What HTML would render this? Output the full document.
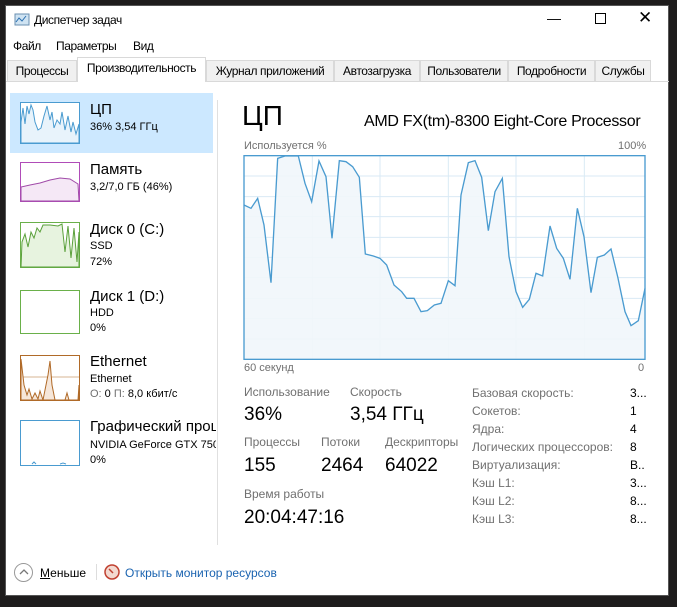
<!DOCTYPE html>
<html><head><meta charset="utf-8"><style>
*{margin:0;padding:0;box-sizing:border-box}
body{width:677px;height:607px;background:#1e1c1c;position:relative;overflow:hidden;font-family:"Liberation Sans",sans-serif;color:#000}
#win{position:absolute;left:5px;top:5px;width:664px;height:591px;background:#fff;border:1px solid #555}
.a{position:absolute;white-space:nowrap}
.n{font-size:12px;letter-spacing:-0.4px}
.tab{position:absolute;top:60px;height:21px;background:#f0f0f0;border:1px solid #d9d9d9;border-bottom:none;font-size:12px;letter-spacing:-0.4px;text-align:center;line-height:20px;color:#000}
.box{position:absolute;left:20px;width:60px;border:1px solid}
.t1{font-size:15px;color:#000}
.t2{font-size:11px;color:#000}
.lab{font-size:12px;color:#707070}
.val{font-size:19px;color:#000}
.r{font-size:12px;color:#707070}
.rv{font-size:12px;color:#000}
</style></head><body>
<div id="win"></div>
<svg class="a" style="left:14px;top:13px" width="16" height="14"><rect x="1" y="1" width="14" height="11" fill="#cfe3f2" stroke="#6a8fb0"/><path d="M2 9 L5 5 L8 8 L12 3" stroke="#2a6fb0" fill="none"/></svg>
<div class="a n" style="left:34px;top:13px">Диспетчер задач</div>
<div class="a" style="left:547px;top:10px;font-size:14px">—</div>
<div class="a" style="left:595px;top:13px;width:11px;height:11px;border:1px solid #000"></div>
<div class="a" style="left:638px;top:8px;font-size:17px">✕</div>
<div class="a n" style="left:13px;top:39px">Файл</div>
<div class="a n" style="left:56px;top:39px">Параметры</div>
<div class="a n" style="left:133px;top:39px">Вид</div>
<div class="a" style="left:6px;top:81px;width:663px;height:1px;background:#d9d9d9"></div>
<div class="tab" style="left:7px;width:70px">Процессы</div>
<div class="tab" style="left:77px;width:129px;top:57px;height:25px;background:#fff">Производительность</div>
<div class="tab" style="left:206px;width:128px">Журнал приложений</div>
<div class="tab" style="left:334px;width:86px">Автозагрузка</div>
<div class="tab" style="left:420px;width:88px">Пользователи</div>
<div class="tab" style="left:508px;width:87px">Подробности</div>
<div class="tab" style="left:595px;width:56px">Службы</div>

<div class="a" style="left:10px;top:93px;width:203px;height:60px;background:#cce8ff"></div>
<div class="a" style="left:217px;top:100px;width:1px;height:445px;background:#e0e0e0"></div>

<svg class="a" style="left:20px;top:102px" width="60" height="42"><rect x="0.5" y="0.5" width="59" height="41" fill="#fff" stroke="#4a9bd0"/><path d="M1 41 L1 20 L3 6 L5 22 L7 4 L9 12 L11 3 L13 8 L15 20 L18 28 L21 26 L24 14 L27 4 L30 18 L32 10 L34 26 L37 18 L40 22 L42 10 L45 28 L48 14 L51 30 L53 20 L56 32 L59 22 L59 41Z" fill="#e8f3fb" stroke="#4a9bd0"/></svg>
<svg class="a" style="left:20px;top:162px" width="60" height="40"><rect x="0.5" y="0.5" width="59" height="39" fill="#fff" stroke="#b04cb8"/><path d="M1 39 L1 25 L10 23 L20 21 L30 18 L40 16 L50 17 L58 22 L59 39Z" fill="#f5e8f6" stroke="#a04aa8"/></svg>
<svg class="a" style="left:20px;top:222px" width="60" height="46"><rect x="0.5" y="0.5" width="59" height="45" fill="#fff" stroke="#6ab04a"/><path d="M1 45 L2 20 L5 12 L8 25 L11 10 L14 16 L17 6 L20 10 L23 3 L30 3 L38 4 L42 2 L45 30 L48 4 L51 36 L54 6 L57 40 L59 10 L59 45Z" fill="#e7f3df" stroke="#5aa03a"/></svg>
<svg class="a" style="left:20px;top:290px" width="60" height="44"><rect x="0.5" y="0.5" width="59" height="43" fill="#fff" stroke="#6ab04a"/></svg>
<svg class="a" style="left:20px;top:355px" width="60" height="46"><rect x="0.5" y="0.5" width="59" height="45" fill="#fff" stroke="#b06a28"/><line x1="0" y1="22" x2="60" y2="22" stroke="#b06a28" stroke-width="0.6"/><path d="M1 45 L1 4 L4 30 L7 40 L9 34 L12 44 L15 38 L18 44 L20 36 L23 45 L28 20 L30 6 L32 30 L35 45 L45 45 L47 38 L49 45 L58 45 L59 30 L59 45Z" fill="#f6e7da" stroke="#b06a28"/></svg>
<svg class="a" style="left:20px;top:420px" width="60" height="46"><rect x="0.5" y="0.5" width="59" height="45" fill="#fff" stroke="#4a9bd0"/><path d="M12 44 L14 42 L16 44 M40 44 L43 43 L46 44" stroke="#4a9bd0" fill="none"/></svg>

<div class="a t1" style="left:90px;top:101px">ЦП</div>
<div class="a t2" style="left:90px;top:121px">36% 3,54 ГГц</div>
<div class="a t1" style="left:90px;top:161px">Память</div>
<div class="a t2" style="left:90px;top:181px">3,2/7,0 ГБ (46%)</div>
<div class="a t1" style="left:90px;top:221px">Диск 0 (C:)</div>
<div class="a t2" style="left:90px;top:240px">SSD</div>
<div class="a t2" style="left:90px;top:256px">72%</div>
<div class="a t1" style="left:90px;top:288px">Диск 1 (D:)</div>
<div class="a t2" style="left:90px;top:307px">HDD</div>
<div class="a t2" style="left:90px;top:322px">0%</div>
<div class="a t1" style="left:90px;top:353px">Ethernet</div>
<div class="a t2" style="left:90px;top:373px">Ethernet</div>
<div class="a t2" style="left:90px;top:388px;color:#707070">О: <b style="color:#000;font-weight:normal">0</b> П: <span style="color:#000">8,0 кбит/с</span></div>
<div class="a" style="left:90px;top:418px;width:126px;overflow:hidden"><div class="t1">Графический процессор</div><div class="t2" style="margin-top:4px">NVIDIA GeForce GTX 750 Ti</div><div class="t2" style="margin-top:3px">0%</div></div>

<div class="a" style="left:242px;top:100px;font-size:28px;font-weight:300">ЦП</div>
<div class="a" style="left:364px;top:113px;font-size:16px;letter-spacing:-0.3px">AMD FX(tm)-8300 Eight-Core Processor</div>
<div class="a" style="left:244px;top:140px;font-size:11px;color:#707070">Используется %</div>
<div class="a" style="left:618px;top:140px;font-size:11px;color:#707070">100%</div>
<svg class="a" style="left:240px;top:140px" width="410" height="240" viewBox="0 0 1230 720">
<g stroke="#d9eaf5" stroke-width="3">
<line x1="12" y1="108" x2="1215" y2="108"/><line x1="12" y1="170" x2="1215" y2="170"/><line x1="12" y1="230" x2="1215" y2="230"/><line x1="12" y1="292" x2="1215" y2="292"/><line x1="12" y1="352" x2="1215" y2="352"/><line x1="12" y1="413" x2="1215" y2="413"/><line x1="12" y1="475" x2="1215" y2="475"/><line x1="12" y1="536" x2="1215" y2="536"/><line x1="12" y1="597" x2="1215" y2="597"/>
<line x1="217" y1="47" x2="217" y2="658"/><line x1="420" y1="47" x2="420" y2="658"/><line x1="625" y1="47" x2="625" y2="658"/><line x1="828" y1="47" x2="828" y2="658"/><line x1="1033" y1="47" x2="1033" y2="658"/>
</g>
<polygon fill="#f1f6fb" fill-opacity="0.9" points="12,658 12,195 33,205 53,175 72,255 93,428 113,55 135,48 175,48 195,130 215,185 237,63 258,110 276,295 298,62 318,65 338,80 358,112 376,342 400,348 420,355 440,375 462,435 485,455 500,475 522,475 543,515 562,512 583,495 603,490 625,422 645,437 663,165 685,68 705,62 725,112 745,272 765,155 787,115 807,350 828,455 848,502 868,478 888,400 908,408 930,258 950,325 970,355 990,418 1012,205 1032,290 1053,458 1072,352 1093,345 1113,327 1133,410 1155,515 1173,557 1195,542 1215,445 1215,658"/>
<polyline fill="none" stroke="#4a9bd0" stroke-width="4" points="12,195 33,205 53,175 72,255 93,428 113,55 135,48 175,48 195,130 215,185 237,63 258,110 276,295 298,62 318,65 338,80 358,112 376,342 400,348 420,355 440,375 462,435 485,455 500,475 522,475 543,515 562,512 583,495 603,490 625,422 645,437 663,165 685,68 705,62 725,112 745,272 765,155 787,115 807,350 828,455 848,502 868,478 888,400 908,408 930,258 950,325 970,355 990,418 1012,205 1032,290 1053,458 1072,352 1093,345 1113,327 1133,410 1155,515 1173,557 1195,542 1215,445"/>
<rect x="12" y="47" width="1203" height="611" fill="none" stroke="#4a9bd0" stroke-width="4"/>
</svg>
<div class="a" style="left:244px;top:362px;font-size:11px;color:#707070">60 секунд</div>
<div class="a" style="left:638px;top:362px;font-size:11px;color:#707070">0</div>

<div class="a lab" style="left:244px;top:385px">Использование</div>
<div class="a lab" style="left:350px;top:385px">Скорость</div>
<div class="a val" style="left:244px;top:404px">36%</div>
<div class="a val" style="left:350px;top:404px">3,54 ГГц</div>
<div class="a lab" style="left:244px;top:435px">Процессы</div>
<div class="a lab" style="left:321px;top:435px">Потоки</div>
<div class="a lab" style="left:385px;top:435px">Дескрипторы</div>
<div class="a val" style="left:244px;top:455px">155</div>
<div class="a val" style="left:321px;top:455px">2464</div>
<div class="a val" style="left:385px;top:455px">64022</div>
<div class="a lab" style="left:244px;top:487px">Время работы</div>
<div class="a val" style="left:244px;top:507px">20:04:47:16</div>

<div class="a r" style="left:472px;top:386px">Базовая скорость:</div><div class="a rv" style="left:630px;top:386px">3...</div>
<div class="a r" style="left:472px;top:404px">Сокетов:</div><div class="a rv" style="left:630px;top:404px">1</div>
<div class="a r" style="left:472px;top:422px">Ядра:</div><div class="a rv" style="left:630px;top:422px">4</div>
<div class="a r" style="left:472px;top:440px">Логических процессоров:</div><div class="a rv" style="left:630px;top:440px">8</div>
<div class="a r" style="left:472px;top:458px">Виртуализация:</div><div class="a rv" style="left:630px;top:458px">В..</div>
<div class="a r" style="left:472px;top:476px">Кэш L1:</div><div class="a rv" style="left:630px;top:476px">3...</div>
<div class="a r" style="left:472px;top:494px">Кэш L2:</div><div class="a rv" style="left:630px;top:494px">8...</div>
<div class="a r" style="left:472px;top:512px">Кэш L3:</div><div class="a rv" style="left:630px;top:512px">8...</div>

<div class="a" style="left:14px;top:563px;width:19px;height:19px;border:1px solid #999;border-radius:50%"></div>
<svg class="a" style="left:18px;top:567px" width="12" height="10"><path d="M2 7 L6 3 L10 7" stroke="#777" fill="none" stroke-width="1.3"/></svg>
<div class="a" style="left:40px;top:566px;font-size:12px"><u>М</u>еньше</div>
<div class="a" style="left:96px;top:564px;width:1px;height:16px;background:#ddd"></div>
<svg class="a" style="left:104px;top:564px" width="16" height="16"><circle cx="8" cy="8" r="7" fill="#f3d9d0" stroke="#c04030" stroke-width="1.5"/><path d="M5 5 L9 9" stroke="#c04030" stroke-width="1.5"/></svg>
<div class="a" style="left:125px;top:566px;font-size:12px;color:#1a63b0">Открыть монитор ресурсов</div>
</body></html>
